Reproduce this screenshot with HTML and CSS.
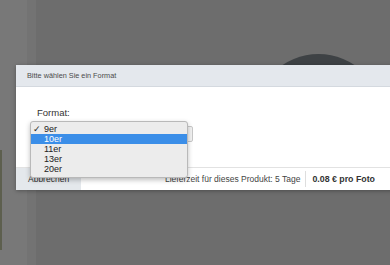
FILE: index.html
```html
<!DOCTYPE html>
<html lang="de">
<head>
    <meta charset="UTF-8">
    <title>Format wählen</title>
    <link rel="stylesheet" href="styles.css">
</head>
<body>

<div class="page">
    <div class="rail"></div>
    <div class="rail-inner"></div>
    <div class="stage">
        <div class="shape"></div>
    </div>
</div>

<!-- Dialog -->
<div class="dialog">
    <div class="dialog-head">Bitte wählen Sie ein Format</div>
    <div class="dialog-body">
        <label class="label">Format:</label>
        <div class="select-box"></div>
    </div>
    <div class="dialog-foot">
        <button class="cancel">Abbrechen</button>
        <span class="info">Lieferzeit für dieses Produkt: 5 Tage</span>
        <span class="price">0.08 € pro Foto</span>
    </div>
</div>

<!-- geöffnete Auswahlliste -->
<ul class="dropdown">
    <li class="checked">9er</li>
    <li class="active">10er</li>
    <li>11er</li>
    <li>13er</li>
    <li>20er</li>
</ul>

</body>
</html>
```

FILE: styles.css
```css
html, body {
    margin: 0;
    padding: 0;
    height: 100%;
    overflow: hidden;
}
body {
    font-family: "Liberation Sans", Arial, sans-serif;
    background-color: #6e6e6e;
}
.page {
    display: flex;
    height: 265px;
}
.rail {
    width: 27px;
    background: linear-gradient(#5d5f4e, #5d5f4e) 0 150px / 2px 100px no-repeat, #787878;
}
.rail-inner {
    width: 9px;
    background-color: #737373;
}
.stage {
    flex: 1;
    position: relative;
    background-color: #6d6d6d;
}
.shape {
    position: absolute;
    left: 218px;
    top: 54px;
    width: 129px;
    height: 129px;
    border-radius: 50%;
    background-color: #3e4245;
}
.dialog {
    position: absolute;
    left: 16px;
    top: 65px;
    width: 380px;
    background: white;
    box-shadow: 0 1px 4px rgba(0, 0, 0, 0.3);
}
.dialog-head {
    height: 21px;
    line-height: 21px;
    padding-left: 11px;
    font-size: 7.3px;
    color: #4b4b4b;
    background-color: #e4e8ed;
    border-bottom: 1px solid #d4d9df;
}
.dialog-body {
    height: 80px;
    padding: 20px 0 0 14px;
    box-sizing: border-box;
}
.label {
    display: block;
    margin-left: 7px;
    font-size: 9.5px;
    color: #333;
}
.select-box {
    margin-top: 8px;
    width: 163px;
    height: 16px;
    background-color: #f2f2f2;
    border: 1px solid #c8c8c8;
    border-radius: 2px;
    box-sizing: border-box;
}
.dialog-foot {
    display: flex;
    align-items: center;
    height: 22px;
    border-top: 1px solid #e2e2e2;
    font-size: 8.5px;
    color: #444;
}
.cancel {
    height: 100%;
    width: 65px;
    padding: 0 0 0 12px;
    text-align: left;
    border: none;
    background-color: #e4e8ec;
    font-family: inherit;
    font-size: 8.5px;
    color: #333;
}
.info {
    margin-left: auto;
    padding-right: 5px;
    border-right: 1px solid #dedede;
    line-height: 16px;
}
.price {
    padding: 0 21px 0 6px;
    font-size: 8.8px;
    font-weight: bold;
    color: #333;
}
.dropdown {
    position: absolute;
    left: 30px;
    top: 121px;
    width: 158px;
    margin: 0;
    padding: 2px 0 3px;
    list-style: none;
    background-color: #ececec;
    border: 1px solid #b9b9b9;
    border-radius: 3px;
    box-sizing: border-box;
    box-shadow: 0 2px 5px rgba(0, 0, 0, 0.25);
    font-size: 9px;
    color: #222;
}
.dropdown li {
    height: 10px;
    line-height: 10px;
    padding-left: 13px;
}
.dropdown .checked {
    position: relative;
}
.dropdown .checked::before {
    content: "✓";
    position: absolute;
    left: 2px;
    font-size: 9px;
}
.dropdown .active {
    background-color: #3b8ee8;
    color: white;
}
```
